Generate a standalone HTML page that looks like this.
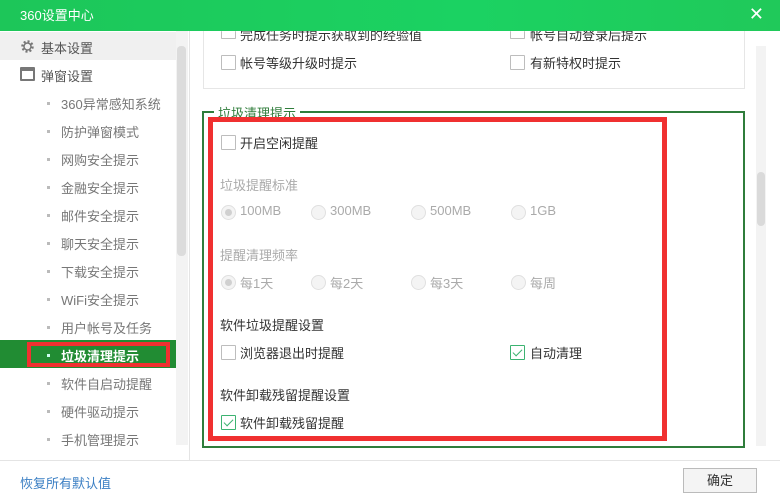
<!DOCTYPE html>
<html><head><meta charset="utf-8"><style>
*{margin:0;padding:0;box-sizing:border-box}
body{width:780px;height:500px;position:relative;overflow:hidden;background:#fff;font-family:"Liberation Sans","Noto Sans CJK SC",sans-serif;font-size:13px;color:#333}
.a{position:absolute;white-space:nowrap}
.title{left:0;top:0;width:780px;height:31px;background:linear-gradient(90deg,#1dc659,#1bd262 60%,#20c95a);color:#fff;font-size:13px;line-height:31px;padding-left:20px}
.cb{position:absolute;width:15px;height:15px;border:1px solid #bdbdbd;background:#fff;border-radius:1px}
.cb.on{border-color:#3cb371}
.cb.on:after{content:"";position:absolute;left:4px;top:1px;width:4px;height:8px;border:solid #3cb371;border-width:0 1.5px 1.5px 0;transform:rotate(45deg)}
.rd{position:absolute;width:15px;height:15px;border:1px solid #e0e0e0;border-radius:50%;background:#f4f4f4}
.rd.on:after{content:"";position:absolute;left:3px;top:3px;width:7px;height:7px;border-radius:50%;background:#d0d0d0}
.g{color:#aaa}
.sub{color:#777;left:61px}
.dot{left:47px;width:3px;height:3px;background:#bbb}
</style></head><body>
<!-- sidebar -->
<div class="a" style="left:0;top:32px;width:176px;height:28px;background:#f0f0f0"></div>
<svg class="a" style="left:20px;top:39px" width="15" height="15" viewBox="0 0 15 15"><circle cx="7.5" cy="7.5" r="5" fill="none" stroke="#777" stroke-width="2.5" stroke-dasharray="2 1.9"/><circle cx="7.5" cy="7.5" r="3.5" fill="none" stroke="#777" stroke-width="1.5"/></svg>
<div class="a" style="left:41px;top:38px;color:#555">基本设置</div>
<div class="a" style="left:20px;top:67px;width:15px;height:14px;border:2px solid #777;border-top-width:4px;border-radius:1px"></div>
<div class="a" style="left:41px;top:66px;color:#555">弹窗设置</div>
<div class="a" style="left:0;top:340px;width:176px;height:28px;background:#218c33"></div>
<div class="a" style="left:27px;top:342px;width:143px;height:25px;border:4px solid #f03030"></div>
<div class="a dot" style="top:102px"></div><div class="a sub" style="top:94px">360异常感知系统</div>
<div class="a dot" style="top:130px"></div><div class="a sub" style="top:122px">防护弹窗模式</div>
<div class="a dot" style="top:158px"></div><div class="a sub" style="top:150px">网购安全提示</div>
<div class="a dot" style="top:186px"></div><div class="a sub" style="top:178px">金融安全提示</div>
<div class="a dot" style="top:214px"></div><div class="a sub" style="top:206px">邮件安全提示</div>
<div class="a dot" style="top:242px"></div><div class="a sub" style="top:234px">聊天安全提示</div>
<div class="a dot" style="top:270px"></div><div class="a sub" style="top:262px">下载安全提示</div>
<div class="a dot" style="top:298px"></div><div class="a sub" style="top:290px">WiFi安全提示</div>
<div class="a dot" style="top:326px"></div><div class="a sub" style="top:318px">用户帐号及任务</div>
<div class="a dot" style="top:354px;background:#cfe"></div><div class="a" style="left:61px;top:346px;color:#fff;font-weight:bold">垃圾清理提示</div>
<div class="a dot" style="top:382px"></div><div class="a sub" style="top:374px">软件自启动提醒</div>
<div class="a dot" style="top:410px"></div><div class="a sub" style="top:402px">硬件驱动提示</div>
<div class="a dot" style="top:438px"></div><div class="a sub" style="top:430px">手机管理提示</div>
<div class="a" style="left:176px;top:31px;width:12px;height:414px;background:#f3f3f3"></div>
<div class="a" style="left:177px;top:46px;width:9px;height:210px;background:#dcdcdc;border-radius:4px"></div>
<div class="a" style="left:189px;top:31px;width:1px;height:430px;background:#e4e4e4"></div>
<!-- right -->
<div class="a" style="left:203px;top:25px;width:542px;height:64px;border:1px solid #e6e6e6"></div>
<div class="cb" style="left:221px;top:31px;height:8px;border-top:none"></div><div class="a" style="left:240px;top:25px">完成任务时提示获取到的经验值</div>
<div class="cb" style="left:510px;top:31px;height:8px;border-top:none"></div><div class="a" style="left:530px;top:25px">帐号自动登录后提示</div>
<div class="cb" style="left:221px;top:55px"></div><div class="a" style="left:240px;top:53px">帐号等级升级时提示</div>
<div class="cb" style="left:510px;top:55px"></div><div class="a" style="left:530px;top:53px">有新特权时提示</div>
<div class="a title">360设置中心</div>
<div class="a" style="right:16px;top:4px;color:#fff;font-size:18px">✕</div>
<div class="a" style="left:202px;top:111px;width:543px;height:337px;border:2px solid #2f7d3b"></div>
<div class="a" style="left:214px;top:103px;background:#fff;padding:0 4px;color:#2f7d3b">垃圾清理提示</div>
<div class="a" style="left:208px;top:117px;width:459px;height:324px;border:5px solid #f03030"></div>
<div class="cb" style="left:221px;top:135px"></div><div class="a" style="left:240px;top:133px">开启空闲提醒</div>
<div class="a g" style="left:220px;top:175px">垃圾提醒标准</div>
<div class="rd on" style="left:221px;top:205px"></div><div class="a g" style="left:240px;top:203px">100MB</div>
<div class="rd" style="left:311px;top:205px"></div><div class="a g" style="left:330px;top:203px">300MB</div>
<div class="rd" style="left:411px;top:205px"></div><div class="a g" style="left:430px;top:203px">500MB</div>
<div class="rd" style="left:511px;top:205px"></div><div class="a g" style="left:530px;top:203px">1GB</div>
<div class="a g" style="left:220px;top:245px">提醒清理频率</div>
<div class="rd on" style="left:221px;top:275px"></div><div class="a g" style="left:240px;top:273px">每1天</div>
<div class="rd" style="left:311px;top:275px"></div><div class="a g" style="left:330px;top:273px">每2天</div>
<div class="rd" style="left:411px;top:275px"></div><div class="a g" style="left:430px;top:273px">每3天</div>
<div class="rd" style="left:511px;top:275px"></div><div class="a g" style="left:530px;top:273px">每周</div>
<div class="a" style="left:220px;top:315px">软件垃圾提醒设置</div>
<div class="cb" style="left:221px;top:345px"></div><div class="a" style="left:240px;top:343px">浏览器退出时提醒</div>
<div class="cb on" style="left:510px;top:345px"></div><div class="a" style="left:530px;top:343px">自动清理</div>
<div class="a" style="left:220px;top:385px">软件卸载残留提醒设置</div>
<div class="cb on" style="left:221px;top:415px"></div><div class="a" style="left:240px;top:413px">软件卸载残留提醒</div>
<div class="a" style="left:756px;top:46px;width:10px;height:400px;background:#f3f3f3"></div>
<div class="a" style="left:757px;top:172px;width:8px;height:54px;background:#dadada;border-radius:4px"></div>
<!-- footer -->
<div class="a" style="left:0;top:460px;width:780px;height:1px;background:#e4e4e4"></div>
<div class="a" style="left:20px;top:473px;color:#3b7fc4">恢复所有默认值</div>
<div class="a" style="left:683px;top:468px;width:74px;height:25px;border:1px solid #bbb;background:#f4f4f4;text-align:center;line-height:23px;color:#333">确定</div>
</body></html>
